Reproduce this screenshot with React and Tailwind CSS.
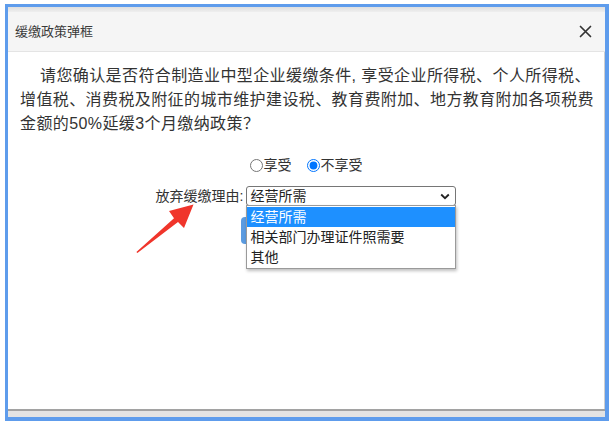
import { useState } from "react";

const options = ["经营所需", "相关部门办理证件照需要", "其他"];

function CloseIcon() {
  return (
    <svg width="13" height="13" viewBox="0 0 13 13" className="block">
      <path d="M1.5 1.5 L11.5 11.5 M11.5 1.5 L1.5 11.5" stroke="#333" strokeWidth="1.7" strokeLinecap="round" />
    </svg>
  );
}

function Chevron() {
  return (
    <svg width="10" height="7" viewBox="0 0 10 7" className="block">
      <path d="M1.2 1.5 L5 5.2 L8.8 1.5" fill="none" stroke="#222" strokeWidth="1.8" />
    </svg>
  );
}

function RedArrow() {
  // 截图标注箭头
  return (
    <svg className="absolute left-0 top-0 pointer-events-none" width="615" height="427" viewBox="0 0 615 427">
      <polygon
        points="136.4,252.0 174.0,218.2 169.0,211.0 193.5,204.5 184.0,228.0 178.0,222.0 137.4,253.0"
        fill="#f0352b"
      />
    </svg>
  );
}

export default function App() {
  const [choice, setChoice] = useState("no");

  return (
    <div className="relative w-[615px] h-[427px] bg-white pl-[5px] pt-[4px]" style={{ fontFamily: '"Liberation Sans", "Noto Sans CJK SC", sans-serif' }}>
      <div className="w-[604px] h-[417px] border-l-[3px] border-t-[3px] border-r-4 border-b-4 border-[#5e9cec] flex flex-col bg-white">
        <div className="h-[5px] bg-gradient-to-b from-[#dedede] to-[#efefef]" />
        <div className="h-[40px] bg-[#f5f5f5] border-b border-[#e4e4e4] flex items-center justify-between pl-[7px] pr-[13px]">
          <span className="text-[13px] text-[#3a3a3a]">缓缴政策弹框</span>
          <CloseIcon />
        </div>

        <div className="flex-1 border-r border-[#cfcfcf] flex flex-col">
          <div className="pt-[12px] pl-[12px] text-[16px] leading-[24px] text-[#333] tracking-[0.4px]">
            <p className="pl-[20px]">请您确认是否符合制造业中型企业缓缴条件, 享受企业所得税、个人所得税、</p>
            <p>增值税、消费税及附征的城市维护建设税、教育费附加、地方教育附加各项税费</p>
            <p>金额的50%延缓3个月缴纳政策？</p>
          </div>

          <div className="mt-[19px] h-[20px] flex items-center justify-center text-[14px] text-[#333]">
            <label className="flex items-center">
              <input type="radio" name="enjoy" checked={choice === "yes"} onChange={() => setChoice("yes")} className="w-[13px] h-[13px] m-0 mr-[1px]" />
              享受
            </label>
            <label className="flex items-center ml-[15px]">
              <input type="radio" name="enjoy" checked={choice === "no"} onChange={() => setChoice("no")} className="w-[13px] h-[13px] m-0 mr-[1px]" />
              不享受
            </label>
          </div>

          <div className="mt-[11px] flex justify-center items-start text-[14px] text-[#333]">
            <span className="leading-[20px] mr-[3px]">放弃缓缴理由:</span>
            <div className="relative w-[210px]">
              <div className="h-[20px] border border-[#767676] rounded-[3px] bg-white flex items-center justify-between pl-[3px] pr-[5px]">
                <span className="text-[#222]">经营所需</span>
                <Chevron />
              </div>
              <div className="absolute left-[-5px] top-[31px] w-[80px] h-[27px] rounded-[4px] bg-[#5b9be0]" />
              <ul className="absolute left-0 top-[19px] w-[210px] bg-white border border-[#9a9a9a] shadow-[1px_2px_3px_rgba(0,0,0,0.25)] py-[1px]">
                {options.map((o, i) => (
                  <li
                    key={o}
                    className={i === 0 ? "h-[20px] leading-[20px] px-[3px] bg-[#1e90ff] text-white" : "h-[20px] leading-[20px] px-[3px] text-[#222]"}
                  >
                    {o}
                  </li>
                ))}
              </ul>
            </div>
          </div>
        </div>

        <div className="h-[8px] border-t-2 border-[#a2a2a2] bg-[#e3e3e3]" />
      </div>
      <RedArrow />
    </div>
  );
}
